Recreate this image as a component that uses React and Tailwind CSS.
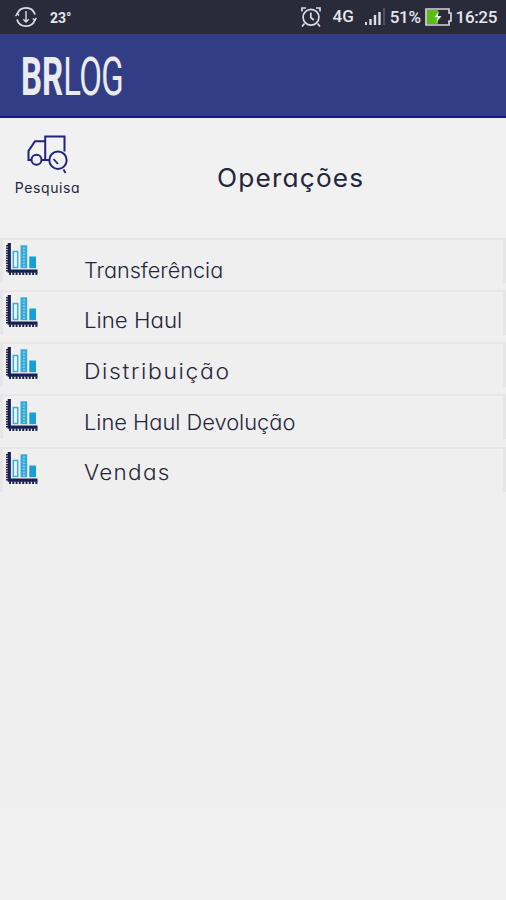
import { clsx } from 'clsx';

const operations = [
  { label: 'Transferência', row: 'h-[52px]', text: 'mt-[18px] scale-x-[1.03]' },
  { label: 'Line Haul', row: 'h-[52px]', text: 'mt-[16px] scale-x-[1.06]' },
  { label: 'Distribuição', row: 'h-[52px]', text: 'mt-[15px] scale-x-[1.09] tracking-[1.5px]' },
  { label: 'Line Haul Devolução', row: 'h-[53px]', text: 'mt-[14px] scale-x-[1.04]' },
  { label: 'Vendas', row: 'h-[45px]', text: 'mt-[11px] scale-x-[1.07] tracking-[1.2px]' },
];

function StatusBar() {
  return (
    <div className="flex h-[34px] items-center justify-between bg-[#292b3b] font-[Roboto,sans-serif] font-medium text-[#e6e7ec]">
      <div className="flex items-center pl-[15px]">
        <svg className="h-[22px] w-[22px]" viewBox="0 0 22 22" fill="none" stroke="#dcdde3" strokeWidth="1.8">
          <path d="M2 8.5A9.4 9.4 0 0 1 20 8.5M2 13.5A9.4 9.4 0 0 0 20 13.5" />
          <path d="M11 5V16M8.3 13.2L11 16L13.7 13.2M.5 10.2L2 8L4.2 9.3M21.5 11.8L20 14L17.8 12.7" strokeWidth="1.4" />
        </svg>
        <span className="ml-[13px] pt-[2px] text-[14px] leading-[20px] font-bold">23°</span>
      </div>
      <div className="flex items-center pr-[9px]">
        <svg className="h-[22px] w-[22px]" viewBox="0 0 22 22" fill="none" stroke="#dcdde3" strokeWidth="1.7">
          <circle cx="11" cy="11.2" r="7.9" />
          <path d="M2 5.5V2H6M16 2H20V5.5M4.5 17.5L2 20.5M17.5 17.5L20 20.5M10.8 6.5V11.5L13.8 14" />
        </svg>
        <span className="ml-[11px] text-[17px]">4G</span>
        <svg className="ml-[11px] h-[20px] w-[21px]" viewBox="0 0 21 20">
          <path d="M0 15h2v3H0zM4.3 12h2.4v6H4.3zM8.8 8h2.4v10H8.8zM13.3 5h2.4v13h-2.4z" fill="#dcdde3" />
          <path d="M18 1h2v17h-2z" fill="#505260" />
        </svg>
        <span className="ml-[4px] pt-[2px] text-[17px] tracking-[-0.35px]">51%</span>
        <svg className="ml-[4px] h-[18px] w-[27px]" viewBox="0 0 27 18">
          <path d="M1 1H24V5H26V13H24V17H1Z" fill="#292b3b" stroke="#d5d5de" strokeWidth="1.7" />
          <path d="M2 2h11v14H2z" fill="#5cbc13" />
          <path d="M14.2 3L9.5 9.3H13L10.8 15L16.5 7.9H12.8Z" fill="#eceef0" />
        </svg>
        <span className="ml-[4px] pt-[2px] text-[17px] tracking-[-0.35px]">16:25</span>
      </div>
    </div>
  );
}

function TruckSearchIcon() {
  return (
    <svg className="h-[40px] w-[42px]" viewBox="0 0 42 40" fill="none" stroke="#23237b" strokeWidth="2">
      <path d="M4.3 25H1.5V16L8 6.3H18.2M18.2 25H14.5M18.2 26V1.5H37.5V16.5M18.2 25H22" />
      <circle cx="9.5" cy="24.7" r="5" />
      <circle cx="31" cy="25.2" r="8.7" />
      <path d="M26.5 24L31 29M36.5 34.5L38.5 38" strokeWidth="1.8" />
    </svg>
  );
}

function ChartIcon() {
  return (
    <svg className="h-[33px] w-[33px]" viewBox="0 0 33 33" fill="none">
      <path d="M1 2V29" stroke="#202550" strokeWidth="2" strokeDasharray="1.4 1.1" />
      <path d="M3 30.6H31.5" stroke="#202550" strokeWidth="2.6" strokeDasharray="2 1.3" />
      <path d="M3.3 0V28.1H31.5" stroke="#182052" strokeWidth="3.2" />
      <path d="M7.3 8.6H11.7V24.6H7.3Z" stroke="#38afd8" strokeWidth="1.5" fill="#eaf4f7" />
      <path d="M14.5 2.3H21.2V25.2H14.5Z" fill="#35a9d7" />
      <path d="M17.9 4.5V24" stroke="#83cfea" strokeWidth="2" strokeDasharray="1.5 1.5" />
      <path d="M23.3 13.5H30V25.2H23.3Z" fill="#189fd7" />
    </svg>
  );
}

function OperationRow({ label, row, text }) {
  return (
    <li className={row}>
      <div className="flex h-[45px] items-start border-x-[3px] border-t-2 border-[#e6e6e7] bg-[#efefef] pl-[3px]">
        <div className="w-[78px] pt-[3px]">
          <ChartIcon />
        </div>
        <span className={clsx('origin-left text-[21px] leading-[25px] font-light whitespace-nowrap', text)}>{label}</span>
      </div>
    </li>
  );
}

export default function App() {
  return (
    <div className="h-[900px] w-[506px] overflow-hidden bg-[#f1f1f1] font-[Inter,sans-serif] text-[#25263c] [font-feature-settings:'cv11']">
      <StatusBar />

      <header className="h-[84px] border-b-2 border-[#19197c] bg-[#313d84] pt-[18px] pl-[21px]">
        <h1 className="origin-left scale-x-[0.61] font-[Roboto,sans-serif] text-[54px] leading-[50px] whitespace-nowrap text-[#ebebef]">
          <span className="font-bold">BR</span>
          <span className="font-normal tracking-[-1px]">LOG</span>
        </h1>
      </header>

      <section className="flex h-[120px]">
        <button className="flex w-[95px] flex-col items-center pt-[17px] text-[14px] leading-[20px]">
          <TruckSearchIcon />
          <span className="mt-[3px] tracking-[0.6px]">Pesquisa</span>
        </button>
        <h2 className="ml-[122px] origin-left scale-x-[1.05] self-start pt-[43px] text-[25px] leading-[34px] tracking-[1.1px]">
          Operações
        </h2>
      </section>

      <main className="h-[570px] bg-[#efefef]">
        <ul>
          {operations.map((item) => (
            <OperationRow key={item.label} {...item} />
          ))}
        </ul>
      </main>
    </div>
  );
}
